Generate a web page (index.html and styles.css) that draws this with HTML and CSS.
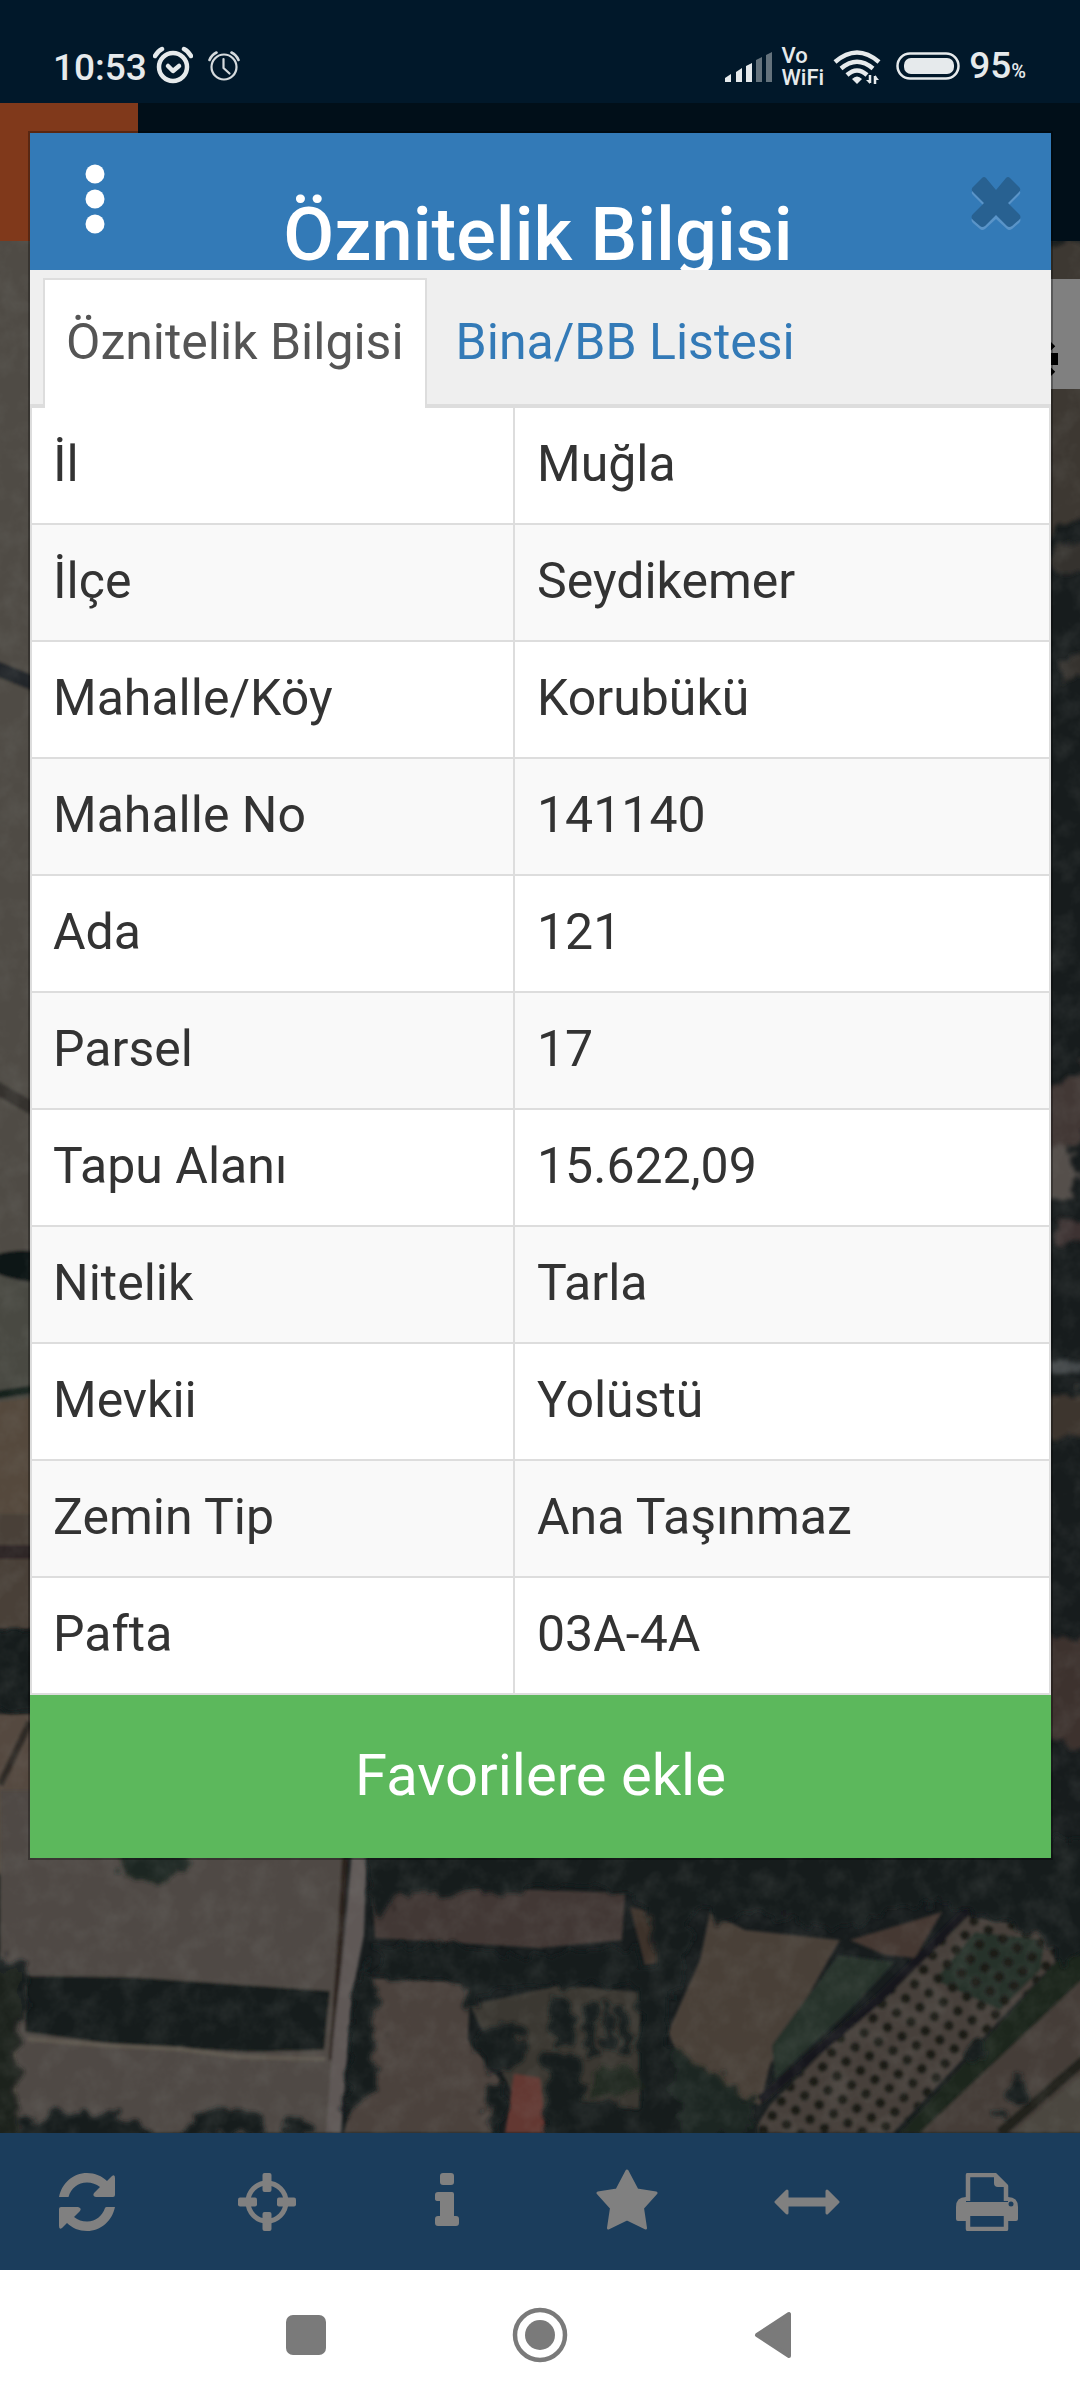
FILE: index.html
```html
<!DOCTYPE html>
<html lang="tr">
<head>
    <meta charset="UTF-8">
    <meta name="viewport" content="width=device-width, initial-scale=1.0">
    <title>Öznitelik Bilgisi</title>
    <link rel="stylesheet" href="styles.css">
</head>
<body>
    <div class="status-bar">
        <div class="status-left">
            <span class="clock">10:53</span>
            <svg class="alarm" width="40" height="38" viewBox="0 0 40 38" fill="none" stroke="#e6eaec" stroke-linecap="round" stroke-linejoin="round">
                <circle cx="20" cy="21" r="14" stroke-width="4.500"/>
                <path d="M15 20l5 5 6-5" stroke-width="4.500"/>
                <path d="M2 10q3-5 7-7M38 10q-3-5-7-7" stroke-width="4.500"/>
            </svg>
            <svg class="alarm-thin" width="32" height="32" viewBox="0 0 32 32" fill="none" stroke="#d5dadd" stroke-linecap="round" stroke-linejoin="round">
                <circle cx="16" cy="18" r="12.500" stroke-width="2.200"/>
                <path d="M15.500 10v9l6 5.500" stroke-width="2.200"/>
                <path d="M1.500 11q2-5 7-7.500M30.500 11q-2-5-7-7.500" stroke-width="2.600"/>
            </svg>
        </div>
        <div class="status-right">
            <svg width="49" height="32" viewBox="0 0 49 32" fill="#e6eaec">
                <path d="M1 31v-4l6-4v8zM12 31V21l6-4v14zM22 31V15l6-3v19z"/>
                <path d="M32 31V9l6-3v25zM42 31V4l6-3v30z" fill="#64727c"/>
            </svg>
            <span class="vowifi">Vo<br>WiFi</span>
            <svg width="48" height="36" viewBox="0 0 48 36" fill="none" stroke="#e6eaec" stroke-width="4.500">
                <path d="M2 13Q24-6 46 13"/>
                <path d="M8 19.500Q24 6 40 19.500"/>
                <path d="M14 26Q24 17 34 26"/>
                <path d="M19 30q5-5 10 0l-5 5z" fill="#e6eaec" stroke="none"/>
                <path d="M37 26v8M42 27v8" stroke-width="2.500"/>
                <path d="M33 31h4v4zM46 31h-4v-5z" fill="#e6eaec" stroke="none"/>
            </svg>
            <svg class="battery" width="64" height="28" viewBox="0 0 64 28">
                <rect x="1.500" y="1.500" width="61" height="25" rx="12.500" fill="none" stroke="#e6eaec" stroke-width="2.500"/>
                <rect x="8" y="6" width="50" height="16" rx="7" fill="#e6eaec"/>
            </svg>
            <span class="percent">95<small>%</small></span>
        </div>
    </div>

    <div class="app-bar">
        <div class="app-menu"></div>
    </div>

    <div class="map">
        <svg class="map-image" viewBox="0 241 1080 1892" preserveAspectRatio="xMidYMin slice">
            <defs>
                <filter id="rough" x="-10%" y="-10%" width="120%" height="120%">
                    <feTurbulence type="fractalNoise" baseFrequency="0.06" numOctaves="3" seed="4" result="n"/>
                    <feDisplacementMap in="SourceGraphic" in2="n" scale="26" xChannelSelector="R" yChannelSelector="G"/>
                    <feGaussianBlur stdDeviation="2"/>
                </filter>
                <filter id="soft">
                    <feGaussianBlur stdDeviation="1.5"/>
                </filter>
                <filter id="leaves" x="0" y="0" width="100%" height="100%">
                    <feTurbulence type="fractalNoise" baseFrequency="0.04" numOctaves="4" seed="9"/>
                    <feColorMatrix values="0 0 0 0 0.25  0 0 0 0 0.26  0 0 0 0 0.24  1.600 0 0 0 -0.650"/>
                </filter>
                <pattern id="trees" width="17" height="17" patternUnits="userSpaceOnUse" patternTransform="rotate(32)">
                    <circle cx="8" cy="8" r="5" fill="#1b1d19"/>
                </pattern>
            </defs>
            <rect y="241" width="1080" height="1892" fill="#171c1d"/>

            <!-- west side -->
            <g filter="url(#soft)">
                <rect x="-5" y="235" width="60" height="1020" fill="#504b45"/>
                <path d="M-5 668L60 694" stroke="#22282a" stroke-width="15"/>
                <path d="M-5 1087L60 1124" stroke="#35332f" stroke-width="13"/>
                <path d="M-5 1262h60v140H-5z" fill="#484943"/>
                <path d="M-5 1255q20-8 60-2v28q-30 4-60-8z" fill="#111619"/>
                <path d="M-5 1395L60 1385" stroke="#17231d" stroke-width="8"/>
                <path d="M-5 1402l65-8v120H-5z" fill="#55493e"/>
                <path d="M-5 1514h60v115H-5z" fill="#483f39"/>
                <path d="M-5 1545h60v14H-5z" fill="#2e2826"/>
                <path d="M-5 1714h60v160H-5z" fill="#54493f"/>
                <path d="M0 1785L30 1722" stroke="#2e2925" stroke-width="7"/>
            </g>

            <!-- east side -->
            <g filter="url(#rough)">
                <path d="M1040 241h60v270l-60 30z" fill="#3e3933"/>
                <path d="M1050 560q20-30 50-20v30h-50zM1060 660l40-10v26l-40 4z" fill="#35332d"/>
                <path d="M1045 1090l50-30v60l-50 50z" fill="#423735"/>
                <path d="M1045 1150h30v50h-30z" fill="#55504c"/>
                <path d="M1060 1220h40v22h-40z" fill="#3c3032"/>
                <path d="M1040 1360h60v12h-60z" fill="#454a4c"/>
                <path d="M1040 1392h60v44h-60z" fill="#3c362f"/>
                <path d="M1040 1634l60 10v100h-60z" fill="#3d332f"/>
            </g>

            <!-- fields south of the parcel -->
            <g filter="url(#soft)">
                <path d="M0 1790H345L338 2133H0z" fill="#504a44"/>
                <path d="M26 1976L130 1977L330 1991L324 2050L250 2052L120 2045L25 2032z" fill="#121d1b"/>
                <path d="M28 2039L100 2045L180 2049L240 2057L325 2059" fill="none" stroke="#5f5850" stroke-width="4"/>
                <path d="M14 2050V2133" stroke="#605850" stroke-width="3"/>
                <path d="M345 1858L339 1965L332 2060" fill="none" stroke="#2b221e" stroke-width="6"/>
                <path d="M352 1850H367L364 1935L352 1995L346 2070L341 2133H326L333 2040L342 1960z" fill="#5e5856"/>
                <path d="M372 1885L540 1890L625 1893L622 1940L540 1948L375 1938z" fill="#423935"/>
                <path d="M368 1978L470 1982L468 2040L500 2080L492 2133H344L362 2060z" fill="#4c433c"/>
                <path d="M470 2005L560 1985L640 1992L640 2110L520 2110z" fill="#3b3833"/>
                <path d="M630 1907L665 1915L680 1960L645 1965z" fill="#3c302b"/>
                <path d="M710 1912L745 1930L840 1940L800 2010L770 2065L760 2105L690 2085L668 2032L700 1960z" fill="#483f39"/>
                <path d="M838 1955L895 1962L850 2010L775 2080L772 2045z" fill="#26302c"/>
                <path d="M850 1940L942 1912L915 1958L885 1955z" fill="#453730"/>
                <path d="M960 1915L1052 1930L1055 1962L893 2133H752L770 2105z" fill="#47413b"/>
                <path d="M975 1932L1045 1940L1040 1970L1000 2010L935 1980z" fill="#253029"/>
                <path d="M960 1915L1052 1930L1055 1962L893 2133H752L770 2105z" fill="url(#trees)"/>
                <path d="M968 1910L880 1998L760 2100" fill="none" stroke="#14171a" stroke-width="9"/>
                <path d="M1062 1955L900 2133H1090V1955z" fill="#1f251f"/>
                <path d="M1090 1972L920 2133H1090z" fill="#443e39"/>
                <path d="M1090 2055L1000 2133" stroke="#20231f" stroke-width="10"/>
                <path d="M1090 2068L1012 2133H1090z" fill="#4b4640"/>
                <path d="M514 2074L540 2078L546 2133H505z" fill="#643733"/>
            </g>

            <!-- trees -->
            <g filter="url(#rough)" fill="#161c1e">
                <ellipse cx="155" cy="1860" rx="36" ry="20" fill="#1c2520"/>
                <ellipse cx="8" cy="1990" rx="20" ry="35"/>
                <path d="M-10 1970h28v180h-28z" fill="#1a221e"/>
                <path d="M-10 1629h70v80h-70z"/>
                <path d="M20 2122Q80 2102 150 2125V2150H20z"/>
                <path d="M182 2135Q190 2105 225 2106Q262 2110 264 2135z"/>
                <ellipse cx="297" cy="2128" rx="14" ry="11"/>
                <path d="M368 1840H1090V1945L1065 1968L1040 1935L985 1915L940 1900L830 1930L760 1912L715 1925L700 1900L680 1990L655 1985L650 1912L625 1890L585 1885L480 1892H400L375 1925z"/>
                <path d="M378 1945L460 1948L540 1955L640 1945L640 1985L560 1985L480 1992L470 2015L455 1980L376 1975z"/>
                <path d="M362 1960Q388 2000 372 2020Q392 2060 362 2100L345 2120L352 2020z"/>
                <circle cx="500" cy="2045" r="23"/>
                <ellipse cx="495" cy="2106" rx="10" ry="24"/>
                <path d="M640 1970h28v70l35 45l50 30v30H545v-30l60-15l35 5z"/>
                <path d="M545 2055h35v60h-35z"/>
                <path d="M550 2000h24v45h-24zM586 2005h12v50h-12zM604 2000h10v50h-10zM620 2005h8v50h-8z"/>
                <path d="M590 2070h48v25h-48z" fill="#202923"/>
                <path d="M672 2048L755 2100L745 2135H680z" fill="#1e2622"/>
                <ellipse cx="1017" cy="2091" rx="8" ry="12"/>
                <circle cx="1001" cy="2110" r="6"/>
                <circle cx="976" cy="2051" r="8"/>
            </g>
            <rect y="241" width="1080" height="1892" filter="url(#leaves)" opacity="0.2"/>
        </svg>
        <button class="map-settings" type="button" aria-label="Ayarlar">
            <svg width="50" height="50" viewBox="0 0 50 50">
                <circle cx="25" cy="25" r="13" fill="none" stroke="#000" stroke-width="9"/>
                <path d="M25 1v10M25 39v10M1 25h10M37 25h12M8 8l7 7M35 35l7 7M8 42l7-7M35 15l7-7" stroke="#000" stroke-width="12"/>
            </svg>
        </button>
    </div>

    <div class="toolbar">
        <button type="button" aria-label="Yenile">
            <svg width="58" height="58" viewBox="0 0 58 58" fill="#808080">
                <path d="M1 24C4 10 15 0 29 0C37 0 44 3 49 8L54 3Q57 1 57 5V22Q57 24 55 24H38Q34 23 36 20L42 14C38 11 34 9.500 29 9.500C20 9.500 13 15 10.500 24Z"/>
                <path d="M57 34C54 48 43 58 29 58C21 58 14 55 9 50L4 55Q1 57 1 53V36Q1 34 3 34H20Q24 35 22 38L16 44C20 47 24 48.500 29 48.500C38 48.500 44 43 47 35Q47.500 34 48.500 34Z"/>
            </svg>
        </button>
        <button type="button" aria-label="Konumum">
            <svg width="58" height="58" viewBox="0 0 58 58" fill="#808080">
                <circle cx="29" cy="29" r="19" fill="none" stroke="#808080" stroke-width="5"/>
                <rect x="24.500" y="0" width="9" height="19" rx="2"/>
                <rect x="24.500" y="39" width="9" height="19" rx="2"/>
                <rect x="0" y="24.500" width="19" height="9" rx="2"/>
                <rect x="39" y="24.500" width="19" height="9" rx="2"/>
            </svg>
        </button>
        <button type="button" aria-label="Bilgi">
            <svg width="24" height="58" viewBox="0 0 24 58" fill="#808080">
                <rect x="5" y="0" width="14" height="12" rx="3"/>
                <path d="M3 19H17Q19 19 19 21V43H21Q24 43 24 46V50Q24 53 21 53H3Q0 53 0 50V46Q0 43 3 43H5V28H3Q0 28 0 26V22Q0 19 3 19Z"/>
            </svg>
        </button>
        <button type="button" aria-label="Favoriler">
            <svg width="62" height="66" viewBox="0 0 62 66" fill="#808080" stroke="#808080" stroke-width="3" stroke-linejoin="round">
                <path d="M31 2L41 21L60 24L46.500 39L49.500 59L31 50L12.500 59L15.500 39L2 24L21 21Z"/>
            </svg>
        </button>
        <button type="button" aria-label="Ölçüm">
            <svg width="66" height="26" viewBox="0 0 66 26" fill="#808080" stroke="#808080" stroke-width="3" stroke-linejoin="round">
                <path d="M2 13L13 2V10H53V2L64 13L53 24V16H13V24Z"/>
            </svg>
        </button>
        <button type="button" aria-label="Yazdır">
            <svg width="62" height="58" viewBox="0 0 62 58">
                <path d="M12 28V2H39L50 13V28" fill="none" stroke="#808080" stroke-width="4.500" stroke-linejoin="round"/>
                <path d="M38 2L50 14H42Q38 14 38 10Z" fill="#808080"/>
                <path d="M10 24Q0 24 0 34V46Q0 48 2 48H10V43H52V48H60Q62 48 62 46V34Q62 24 52 24V29H10Z" fill="#808080"/>
                <path d="M12 42V56H50V42" fill="none" stroke="#808080" stroke-width="4.500" stroke-linejoin="round"/>
                <circle cx="55" cy="31" r="2.500" fill="#1b3d5c"/>
            </svg>
        </button>
    </div>

    <div class="android-nav">
        <svg width="40" height="56" viewBox="0 0 40 56"><rect y="8" width="40" height="40" rx="7" fill="#7a7a7a"/></svg>
        <svg width="56" height="56" viewBox="0 0 56 56">
            <circle cx="28" cy="28" r="25" fill="none" stroke="#7a7a7a" stroke-width="4.500"/>
            <circle cx="28" cy="28" r="15" fill="#7a7a7a"/>
        </svg>
        <svg width="40" height="56" viewBox="0 0 40 56"><path d="M3 28L35 7V49Z" fill="#7a7a7a" stroke="#7a7a7a" stroke-width="4" stroke-linejoin="round"/></svg>
    </div>

    <div class="modal" role="dialog" aria-labelledby="modalTitle">
        <div class="modal-header">
            <button class="modal-menu" type="button" aria-label="Menü">
                <svg width="20" height="70" viewBox="0 0 20 70" fill="#fff">
                    <circle cx="10" cy="10" r="9.500"/>
                    <circle cx="10" cy="35" r="9.500"/>
                    <circle cx="10" cy="60" r="9.500"/>
                </svg>
            </button>
            <h4 class="modal-title" id="modalTitle">Öznitelik Bilgisi</h4>
            <button class="modal-close" type="button" aria-label="Kapat">
                <svg width="50" height="54" viewBox="0 0 50 54">
                    <path d="M3 12l8-8q2-2 4 0l10 10L35 4q2-2 4 0l8 8q4 3 1 6L37 29L48 40q3 3 0 6l-7 6q-3 2-5 0L25 42L14 52q-3 2-5 0l-7-6q-3-3 0-6L13 29L2 18q-3-3 1-6z" fill="#5a94c8"/>
                    <path d="M3 9l8-8q2-2 4 0l10 12L35 1q2-2 4 0l8 8q4 3 1 6L37 26L48 37q3 3 0 6l-7 6q-3 2-5 0L25 38L14 49q-3 2-5 0l-7-6q-3-3 0-6L13 26L2 15q-3-3 1-6z" fill="#286191"/>
                </svg>
            </button>
        </div>
        <ul class="nav-tabs">
            <li class="active"><a href="#oznitelik">Öznitelik Bilgisi</a></li>
            <li><a href="#bina">Bina/BB Listesi</a></li>
        </ul>
        <table class="info-table" id="oznitelik">
            <tbody>
                <tr><td>İl</td><td>Muğla</td></tr>
                <tr><td>İlçe</td><td>Seydikemer</td></tr>
                <tr><td>Mahalle/Köy</td><td>Korubükü</td></tr>
                <tr><td>Mahalle No</td><td>141140</td></tr>
                <tr><td>Ada</td><td>121</td></tr>
                <tr><td>Parsel</td><td>17</td></tr>
                <tr><td>Tapu Alanı</td><td>15.622,09</td></tr>
                <tr><td>Nitelik</td><td>Tarla</td></tr>
                <tr><td>Mevkii</td><td>Yolüstü</td></tr>
                <tr><td>Zemin Tip</td><td>Ana Taşınmaz</td></tr>
                <tr><td>Pafta</td><td>03A-4A</td></tr>
            </tbody>
        </table>
        <button class="btn-favorite" type="button">Favorilere ekle</button>
    </div>
</body>
</html>
```

FILE: styles.css
```css
* {
    box-sizing: border-box;
}
body {
    position: relative;
    display: flex;
    flex-direction: column;
    min-height: 100vh;
    margin: 0;
    font-family: Roboto, Arial, sans-serif;
    font-size: 50px;
    color: #333;
    background-color: #fff;
}
button {
    padding: 0;
    border: none;
    background: none;
    font-family: inherit;
    cursor: pointer;
}
svg {
    display: block;
}

/* status bar */
.status-bar {
    display: flex;
    justify-content: space-between;
    height: 103px;
    padding: 32px 54px 0 53px;
    background-color: #01182a;
    color: #e6eaec;
}
.status-left,
.status-right {
    display: flex;
    align-items: center;
    height: 70px;
}
.clock,
.percent {
    padding-top: 2px;
    font-size: 37px;
    font-weight: 500;
    line-height: 70px;
}
.alarm {
    margin: 0 15px 4px 6px;
}
.alarm-thin {
    margin-bottom: 4px;
}
.status-right {
    gap: 9px;
}
.vowifi {
    font-size: 22px;
    font-weight: 500;
    line-height: 22px;
}
.battery {
    margin: 0 0 2px 6px;
}
.percent small {
    font-size: 20px;
}

.app-bar {
    height: 138px;
    background-color: #010f19;
}
.app-menu {
    width: 138px;
    height: 138px;
    background-color: #80391b;
}

/* map */
.map {
    position: relative;
    flex: 1;
    overflow: hidden;
    background-color: #171c1d;
}
.map-image {
    position: absolute;
    width: 100%;
    height: 100%;
}
.map-settings {
    position: absolute;
    top: 38px;
    right: 0;
    width: 110px;
    height: 110px;
    padding: 50px 0 0 39px;
    background-color: #808080;
}

.toolbar {
    display: grid;
    grid-template-columns: repeat(6, 1fr);
    height: 137px;
    background-color: #1b3d5c;
}
.toolbar button {
    display: flex;
    align-items: center;
    justify-content: center;
    padding-right: 6px;
}

.android-nav {
    display: flex;
    align-items: center;
    justify-content: center;
    gap: 186px;
    height: 130px;
    background-color: #fff;
}

/* modal */
.modal {
    position: absolute;
    top: 131px;
    left: 28px;
    right: 27px;
    border: 2px solid rgba(0, 0, 0, 0.3);
    background-color: #fff;
    background-clip: padding-box;
}
.modal-header {
    display: flex;
    align-items: flex-start;
    justify-content: space-between;
    height: 137px;
    padding: 31px 30px 0 55px;
    overflow: hidden;
    background-color: #337ab7;
}
.modal-title {
    margin: 18px 0 0;
    color: #fff;
    font-size: 74px;
    font-weight: 500;
    line-height: 106px;
    white-space: nowrap;
}
.modal-close {
    padding-top: 13px;
}
.nav-tabs {
    display: flex;
    margin: 0;
    padding: 8px 13px 0;
    list-style: none;
    background-color: #efefef;
    border-bottom: 4px solid #ddd;
}
.nav-tabs li {
    margin-bottom: -4px;
}
.nav-tabs a {
    display: block;
    padding: 28px 21px 31px;
    border: 2px solid transparent;
    border-bottom: none;
    color: #337ab7;
    line-height: 69px;
    text-decoration: none;
}
.nav-tabs li + li {
    margin-left: 6px;
}
.nav-tabs .active a {
    border-color: #ddd;
    background-color: #fff;
    color: #555;
}
.info-table {
    width: 100%;
    border-spacing: 0;
    border-left: 2px solid #ddd;
}
.info-table td {
    padding: 21px 22px 23px;
    border-right: 2px solid #ddd;
    border-bottom: 2px solid #ddd;
    line-height: 71px;
}
.info-table td:first-child {
    width: 483px;
    padding-left: 21px;
}
.info-table tr:nth-child(even) {
    background-color: #f9f9f9;
}
.btn-favorite {
    display: block;
    width: 100%;
    padding: 41px 0 44px;
    background-color: #5cb85c;
    color: #fff;
    font-size: 58px;
    line-height: 78px;
}
```
